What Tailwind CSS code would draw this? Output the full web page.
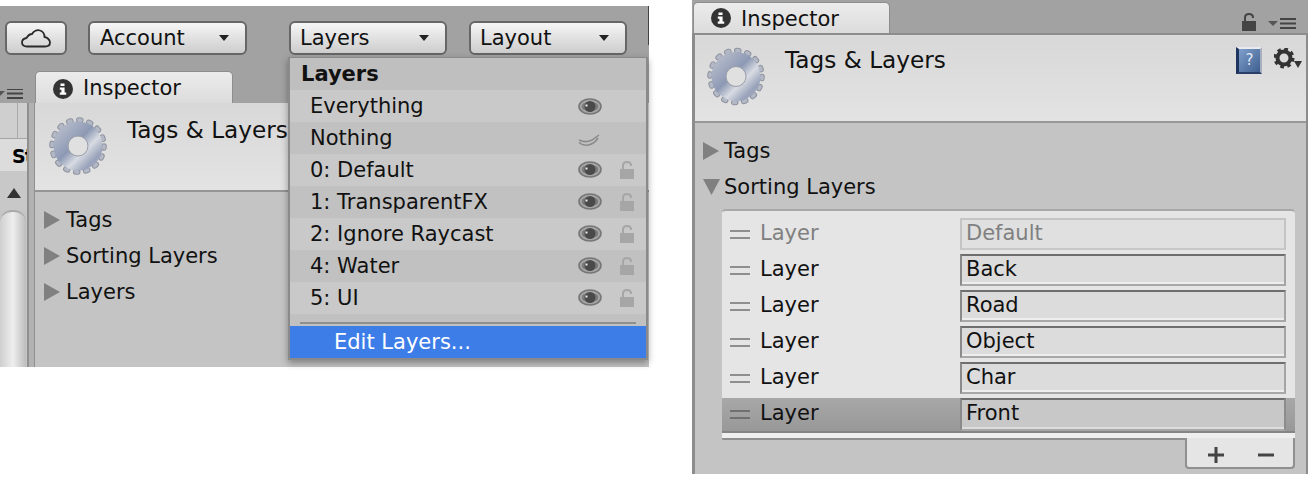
<!DOCTYPE html>
<html lang="en">
<head>
<meta charset="UTF-8">
<title>Tags &amp; Layers</title>
<script src="https://cdn.jsdelivr.net/npm/@tailwindcss/browser@4"></script>
</head>
<body class="bg-white">
<!-- shared icons -->
<svg width="0" height="0" class="absolute">
  <defs>
    <linearGradient id="metal" x1="0" y1="0" x2="1" y2="1">
      <stop offset="0" stop-color="#c4c7cf"/>
      <stop offset="0.25" stop-color="#a6aec2"/>
      <stop offset="0.45" stop-color="#8d99b4"/>
      <stop offset="0.62" stop-color="#d8dbe2"/>
      <stop offset="0.8" stop-color="#98a2ba"/>
      <stop offset="1" stop-color="#aab0bf"/>
    </linearGradient>
    <symbol id="gear" viewBox="0 0 58 58">
      <circle cx="29" cy="29" r="26" fill="none" stroke="#8f93a0" stroke-width="5.500" stroke-linecap="round" stroke-dasharray="2.200 8.010"/>
      <circle cx="29" cy="29" r="26" fill="none" stroke="#b4b9c6" stroke-width="3.500" stroke-linecap="round" stroke-dasharray="2.200 8.010"/>
      <circle cx="29" cy="29" r="24.500" fill="url(#metal)"/>
      <circle cx="29" cy="29" r="10" fill="#e0e0e0" stroke="#9a9da8" stroke-width="1"/>
    </symbol>
    <symbol id="eye" viewBox="0 0 24 17">
      <ellipse cx="12" cy="8.500" rx="11" ry="7.500" fill="#a0a0a0" stroke="#777" stroke-width="1.600"/>
      <ellipse cx="12" cy="8.500" rx="9" ry="5.400" fill="#7c7c7c" stroke="#b0b0b0" stroke-width="1"/>
      <circle cx="12" cy="8.500" r="5.500" fill="#4a4a4a"/>
      <rect x="7.500" y="6.500" width="2" height="2" fill="#eee"/>
    </symbol>
    <symbol id="lock" viewBox="0 0 14 18">
      <path d="M3 9V4.500C3 2 4.600 1 7 1s4 1 4 3.500V5" fill="none" stroke="currentColor" stroke-width="2"/>
      <rect x="0" y="8" width="14" height="10" fill="currentColor"/>
    </symbol>
    <symbol id="info" viewBox="0 0 20 20">
      <circle cx="10" cy="10" r="10" fill="#333"/>
      <path d="M7.500 4.500h4v2.600h-4zM6.800 8.600h4.800v5h1.600v2.200H6.800v-2.200h1.600v-2.800H6.800z" fill="#fff"/>
    </symbol>
    <symbol id="tabmenu" viewBox="0 0 28 12">
      <path d="M0 3h10l-5 5z" fill="#555"/>
      <path d="M12 1h16M12 5.500h16M12 10h16" stroke="#444" stroke-width="2.200"/>
    </symbol>
  </defs>
</svg>

<div class="flex items-start font-['DejaVu_Sans',sans-serif] text-[21px] leading-none text-[#111]">

  <!-- left screenshot -->
  <div class="relative mt-[6px] flex h-[361px] w-[649px] shrink-0 flex-col bg-[#a2a2a2]">
    <div class="absolute right-0 top-0 h-[39px] w-[1px] bg-[#444]"></div>

    <!-- toolbar -->
    <div class="flex h-[65px] shrink-0 pt-[15px]">
      <div class="ml-[5px] flex h-[34px] w-[62px] items-center justify-center rounded-[6px] border-2 border-[#666] bg-linear-to-b from-[#f6f6f6] to-[#cdcdcd]">
        <svg width="30" height="20" viewBox="0 0 30 20"><path d="M6 18.500C2.500 18.500 1 16.500 1 14.500c0-2.500 2-4 4.500-4.500C7 7.500 9 6 11 6c1.500-3 5-4.500 8-3.500 3 1 4.500 3.500 4.500 6.500 3 .5 5.500 3 5.500 5.500 0 2.500-2 4-5 4z" fill="none" stroke="#2a2a2a" stroke-width="1.800"/></svg>
      </div>
      <div class="ml-[21px] flex h-[34px] w-[159px] items-center justify-between rounded-[6px] border-2 border-[#666] bg-linear-to-b from-[#f6f6f6] to-[#cdcdcd] pl-[10px] pr-[16px]">
        <span>Account</span>
        <svg width="10" height="6" viewBox="0 0 10 6"><path d="M0 0h10L5 6z" fill="#222"/></svg>
      </div>
      <div class="ml-[42px] flex h-[34px] w-[158px] items-center justify-between rounded-[6px] border-2 border-[#666] bg-linear-to-b from-[#f6f6f6] to-[#cdcdcd] pl-[9px] pr-[16px]">
        <span>Layers</span>
        <svg width="10" height="6" viewBox="0 0 10 6"><path d="M0 0h10L5 6z" fill="#222"/></svg>
      </div>
      <div class="ml-[22px] flex h-[34px] w-[158px] items-center justify-between rounded-[6px] border-2 border-[#666] bg-linear-to-b from-[#f6f6f6] to-[#cdcdcd] pl-[9px] pr-[16px]">
        <span>Layout</span>
        <svg width="10" height="6" viewBox="0 0 10 6"><path d="M0 0h10L5 6z" fill="#222"/></svg>
      </div>
    </div>

    <!-- tab row -->
    <div class="flex h-[32px] shrink-0 items-end">
      <div class="flex h-[32px] w-[35px] items-end pb-[4px]">
        <svg width="23" height="10" viewBox="5 1 23 10"><use href="#tabmenu" width="28" height="12"/></svg>
      </div>
      <div class="flex h-[32px] w-[198px] items-center rounded-t-[5px] border-x border-t border-[#8d8d8d] bg-linear-to-b from-[#ececec] to-[#dcdcdc] pl-[17px] pt-[2px]">
        <svg width="20" height="20"><use href="#info"/></svg>
        <span class="ml-[10px]">Inspector</span>
      </div>
    </div>

    <div class="flex min-h-0 flex-1">
      <!-- project panel sliver -->
      <div class="flex w-[29px] shrink-0 flex-col border-r-2 border-[#8f8f8f] bg-[#c6c6c6]">
        <div class="h-[36px] shrink-0 border-b border-[#a5a5a5] bg-[#cfcfcf]">
          <div class="ml-[17px] h-full w-[1px] bg-[#aaa]"></div>
        </div>
        <div class="flex h-[32px] shrink-0 items-center overflow-hidden bg-[#dcdcdc] pl-[12px] pt-[3px] text-[19px] font-bold tracking-[-1px] text-black">St</div>
        <div class="flex h-[39px] shrink-0 items-center justify-center bg-[#c8c8c8]">
          <svg class="mt-[4px]" width="14" height="10" viewBox="0 0 14 10"><path d="M7 0l7 10H0z" fill="#333"/></svg>
        </div>
        <div class="flex-1 w-[26px] rounded-t-[12px] border-t-2 border-[#aaa] bg-linear-to-r from-[#cfcfcf] via-[#eeeeee] to-[#bdbdbd]"></div>
      </div>
      <div class="w-[6px] shrink-0 border-r border-[#909090] bg-[#b2b2b2]"></div>

      <!-- inspector -->
      <div class="flex min-w-0 flex-1 flex-col bg-[#c4c4c4]">
        <div class="flex h-[89px] shrink-0 border-b-2 border-[#959595] bg-linear-to-b from-[#d8d8d8] to-[#e3e3e3] pl-[14px] pt-[14px]">
          <svg width="58" height="58"><use href="#gear"/></svg>
          <span class="ml-[20px] text-[23.2px] leading-[26px]">Tags &amp; Layers</span>
        </div>
        <div class="flex flex-col pl-[9px] pt-[10px]">
          <div class="flex h-[36px] items-center"><svg width="16" height="18" viewBox="0 0 16 18"><path d="M0 0l16 9L0 18z" fill="#808080"/></svg><span class="ml-[6px]">Tags</span></div>
          <div class="flex h-[36px] items-center"><svg width="16" height="18" viewBox="0 0 16 18"><path d="M0 0l16 9L0 18z" fill="#808080"/></svg><span class="ml-[6px]">Sorting Layers</span></div>
          <div class="flex h-[36px] items-center"><svg width="16" height="18" viewBox="0 0 16 18"><path d="M0 0l16 9L0 18z" fill="#808080"/></svg><span class="ml-[6px]">Layers</span></div>
        </div>
      </div>
    </div>

    <!-- layers dropdown -->
    <div class="absolute left-[288px] top-[51px] z-10 w-[360px] border-2 border-t-[1px] border-[#8a8a8a] bg-[#c0c0c0] shadow-[0_3px_7px_rgba(0,0,0,0.35)]">
      <div class="flex h-[32px] items-center bg-[#bfbfbf] pl-[11px] font-bold">Layers</div>
      <div class="flex h-[32px] items-center justify-between bg-[#c9c9c9] pl-[20px] pr-[12px]">
        <span>Everything</span>
        <div class="flex w-[56px]"><svg width="24" height="17"><use href="#eye"/></svg></div>
      </div>
      <div class="flex h-[32px] items-center justify-between bg-[#c1c1c1] pl-[20px] pr-[12px]">
        <span>Nothing</span>
        <div class="flex w-[56px]">
          <svg class="mt-[4px]" width="22" height="14" viewBox="0 0 22 14"><path d="M1 7c4 2 9 2 13 0l7-5M1 9.500c4 4 14 4 19-4.500" fill="none" stroke="#8a8a8a" stroke-width="1.500"/></svg>
        </div>
      </div>
      <div class="flex h-[32px] items-center justify-between bg-[#c9c9c9] pl-[20px] pr-[12px]">
        <span>0: Default</span>
        <div class="flex w-[56px] justify-between"><svg width="24" height="17"><use href="#eye"/></svg><svg class="text-[#a6a6a6]" width="14" height="18"><use href="#lock"/></svg></div>
      </div>
      <div class="flex h-[32px] items-center justify-between bg-[#c1c1c1] pl-[20px] pr-[12px]">
        <span>1: TransparentFX</span>
        <div class="flex w-[56px] justify-between"><svg width="24" height="17"><use href="#eye"/></svg><svg class="text-[#a6a6a6]" width="14" height="18"><use href="#lock"/></svg></div>
      </div>
      <div class="flex h-[32px] items-center justify-between bg-[#c9c9c9] pl-[20px] pr-[12px]">
        <span>2: Ignore Raycast</span>
        <div class="flex w-[56px] justify-between"><svg width="24" height="17"><use href="#eye"/></svg><svg class="text-[#a6a6a6]" width="14" height="18"><use href="#lock"/></svg></div>
      </div>
      <div class="flex h-[32px] items-center justify-between bg-[#c1c1c1] pl-[20px] pr-[12px]">
        <span>4: Water</span>
        <div class="flex w-[56px] justify-between"><svg width="24" height="17"><use href="#eye"/></svg><svg class="text-[#a6a6a6]" width="14" height="18"><use href="#lock"/></svg></div>
      </div>
      <div class="flex h-[32px] items-center justify-between bg-[#c9c9c9] pl-[20px] pr-[12px]">
        <span>5: UI</span>
        <div class="flex w-[56px] justify-between"><svg width="24" height="17"><use href="#eye"/></svg><svg class="text-[#a6a6a6]" width="14" height="18"><use href="#lock"/></svg></div>
      </div>
      <div class="h-[12px] bg-[#c1c1c1] px-[10px] pt-[8px]"><div class="h-[2px] bg-[#8f8f8f]"></div></div>
      <div class="flex h-[32px] items-center bg-[#3d7de8] pl-[44px] text-white">Edit Layers...</div>
    </div>
  </div>

  <!-- right screenshot -->
  <div class="ml-[43px] flex h-[474px] w-[616px] shrink-0 flex-col bg-[#a2a2a2]">
    <div class="flex h-[33px] shrink-0 items-end pl-[1px] pr-[12px]">
      <div class="flex h-[31px] w-[197px] items-center rounded-t-[5px] border-x border-t border-[#8d8d8d] bg-linear-to-b from-[#ececec] to-[#dcdcdc] pl-[17px]">
        <svg width="20" height="20"><use href="#info"/></svg>
        <span class="ml-[10px] pt-[2px]">Inspector</span>
      </div>
      <svg class="mb-[2px] ml-auto text-[#444]" width="14" height="18"><use href="#lock"/></svg>
      <svg class="mb-[3px] ml-[12px]" width="28" height="12"><use href="#tabmenu"/></svg>
    </div>
    <div class="flex min-h-0 flex-1 flex-col border-x-[3px] border-r-2 border-[#8c8c8c] bg-[#c4c4c4]">
      <div class="h-[3px] shrink-0 border-t-2 border-[#8c8c8c] bg-[#dcdcdc]"></div>

      <!-- header -->
      <div class="flex h-[87px] shrink-0 items-start border-b-2 border-[#989898] bg-linear-to-b from-[#d8d8d8] to-[#e3e3e3] pl-[12px] pr-[4px] pt-[11px]">
        <svg width="58" height="59"><use href="#gear"/></svg>
        <span class="ml-[20px] text-[23.2px] leading-[26px]">Tags &amp; Layers</span>
        <div class="ml-auto flex h-[27px] w-[26px] items-center justify-center border-y-2 border-l-[3px] border-r-2 border-r-[#a8b0c0] border-t-[#e8eaf0] border-l-[#1e3560] border-b-[#2a3d68] bg-linear-to-br from-[#7f9fcb] to-[#3f5f90] text-[15px] text-[#e4eaf4]">?</div>
        <svg class="ml-[12px] mt-[1px]" width="28" height="24" viewBox="0 0 28 24">
          <circle cx="10" cy="10" r="6.500" fill="none" stroke="#333" stroke-width="4"/>
          <circle cx="10" cy="10" r="9" fill="none" stroke="#333" stroke-width="3" stroke-dasharray="3.600 3.470"/>
          <path d="M20 13h8l-4 7z" fill="#333"/>
        </svg>
      </div>

      <!-- foldouts -->
      <div class="flex flex-col pl-[8px] pt-[10px]">
        <div class="flex h-[36px] items-center"><svg width="16" height="18" viewBox="0 0 16 18"><path d="M0 0l16 9L0 18z" fill="#808080"/></svg><span class="ml-[5px]">Tags</span></div>
        <div class="flex h-[36px] items-center"><svg width="17" height="16" viewBox="0 0 17 16"><path d="M0 0h17l-8.500 16z" fill="#808080"/></svg><span class="ml-[4px]">Sorting Layers</span></div>
      </div>

      <!-- reorderable list -->
      <div class="ml-[27px] mt-[4px] w-[573px] rounded-t-[4px] border-t-2 border-[#a8a8a8] bg-[#e5e5e5] pt-[7px]">
        <div class="mb-[4px] flex h-[32px] items-center pl-[8px] text-[#808080]">
          <div class="h-[9px] w-[20px] border-y-2 border-[#8f8f8f]"></div>
          <span class="ml-[10px] w-[200px] pb-[2px]">Layer</span>
          <div class="flex h-[32px] w-[326px] items-center border-2 border-[#c4c4c4] border-b-[#c8c8c8] bg-[#e0e0e0] pb-[2px] pl-[4px]">Default</div>
        </div>
        <div class="mb-[4px] flex h-[32px] items-center pl-[8px]">
          <div class="h-[9px] w-[20px] border-y-2 border-[#8f8f8f]"></div>
          <span class="ml-[10px] w-[200px] pb-[2px]">Layer</span>
          <div class="flex h-[32px] w-[326px] items-center border-2 border-t-[#6e6e6e] border-l-[#8a8a8a] border-r-[#a4a4a4] border-b-[#a8a8a8] bg-[#dcdcdc] pb-[2px] pl-[4px] shadow-[inset_0_-2px_0_#eeeeee]">Back</div>
        </div>
        <div class="mb-[4px] flex h-[32px] items-center pl-[8px]">
          <div class="h-[9px] w-[20px] border-y-2 border-[#8f8f8f]"></div>
          <span class="ml-[10px] w-[200px] pb-[2px]">Layer</span>
          <div class="flex h-[32px] w-[326px] items-center border-2 border-t-[#6e6e6e] border-l-[#8a8a8a] border-r-[#a4a4a4] border-b-[#a8a8a8] bg-[#dcdcdc] pb-[2px] pl-[4px] shadow-[inset_0_-2px_0_#eeeeee]">Road</div>
        </div>
        <div class="mb-[4px] flex h-[32px] items-center pl-[8px]">
          <div class="h-[9px] w-[20px] border-y-2 border-[#8f8f8f]"></div>
          <span class="ml-[10px] w-[200px] pb-[2px]">Layer</span>
          <div class="flex h-[32px] w-[326px] items-center border-2 border-t-[#6e6e6e] border-l-[#8a8a8a] border-r-[#a4a4a4] border-b-[#a8a8a8] bg-[#dcdcdc] pb-[2px] pl-[4px] shadow-[inset_0_-2px_0_#eeeeee]">Object</div>
        </div>
        <div class="mb-[4px] flex h-[32px] items-center pl-[8px]">
          <div class="h-[9px] w-[20px] border-y-2 border-[#8f8f8f]"></div>
          <span class="ml-[10px] w-[200px] pb-[2px]">Layer</span>
          <div class="flex h-[32px] w-[326px] items-center border-2 border-t-[#6e6e6e] border-l-[#8a8a8a] border-r-[#a4a4a4] border-b-[#a8a8a8] bg-[#dcdcdc] pb-[2px] pl-[4px] shadow-[inset_0_-2px_0_#eeeeee]">Char</div>
        </div>
        <div class="flex h-[33px] items-center bg-linear-to-b from-[#a8a8a8] to-[#989898] pl-[8px]">
          <div class="h-[9px] w-[20px] border-y-2 border-[#707070]"></div>
          <span class="ml-[10px] w-[200px] pb-[2px]">Layer</span>
          <div class="flex h-[33px] w-[326px] items-center border-2 border-t-[#6e6e6e] border-l-[#8a8a8a] border-r-[#8c8c8c] border-b-[#a8a8a8] bg-[#c8c8c8] pb-[2px] pl-[4px] shadow-[inset_0_-2px_0_#dddddd]">Front</div>
        </div>
        <div class="h-[2px] bg-[#858585]"></div>
        <div class="h-[5px] bg-[#efefef]"></div>
      </div>

      <!-- add / remove footer -->
      <div class="ml-[27px] flex w-[573px]">
        <div class="h-[3px] flex-1 rounded-bl-[3px] border-t-2 border-[#8f8f8f]"></div>
        <div class="flex h-[31px] w-[110px] items-center justify-between rounded-b-[4px] border-x-2 border-b-2 border-[#8f8f8f] bg-[#e5e5e5] pl-[21px] pr-[19px] pt-[5px]">
          <svg width="16" height="16" viewBox="0 0 16 16"><path d="M0 6.500h16v3H0zM6.500 0h3v16h-3z" fill="#444"/></svg>
          <svg width="16" height="16" viewBox="0 0 16 16"><path d="M0 6.500h16v3H0z" fill="#444"/></svg>
        </div>
      </div>
    </div>
  </div>
</div>
</body>
</html>
